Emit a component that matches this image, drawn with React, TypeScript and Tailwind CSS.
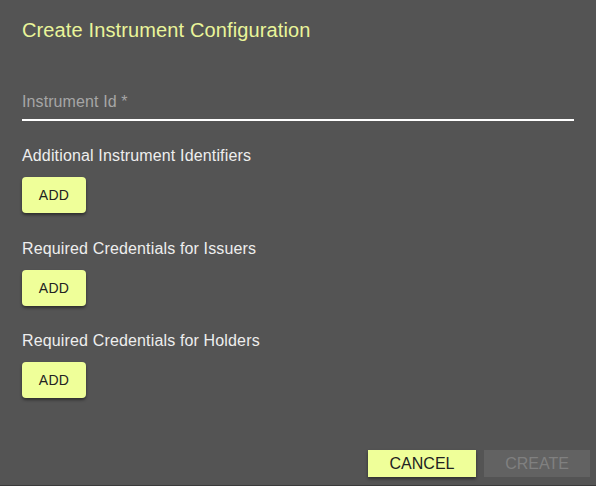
import React from "react";

const font = { fontFamily: '"Liberation Sans", Arial, sans-serif' };

function AddButton() {
  return (
    <button className="mt-[9px] h-[36px] w-[64px] rounded-[4px] bg-[#efff99] text-[14px] text-[#222] tracking-[0.3px] shadow-[0_2px_3px_rgba(0,0,0,0.45)]">
      ADD
    </button>
  );
}

export default function App() {
  return (
    <div
      style={font}
      className="w-[596px] h-[486px] bg-[#545454] border-b border-[#3a3a3a] flex flex-col overflow-hidden"
    >
      <div className="px-[22px] flex flex-col">
        <div className="pt-[14px] h-[46px] text-[20px] leading-[32px] tracking-[0.13px] text-[#eaf59a]">
          Create Instrument Configuration
        </div>
        <div className="mt-[44px] h-[24px] leading-[24px] text-[16px] tracking-[0.1px] text-[#a6a6a6] w-[552px]">
          Instrument Id *
        </div>
        <div className="mt-[5px] h-[2px] w-[552px] bg-white" />

        <div className="mt-[23px] h-[24px] leading-[24px] text-[16px] tracking-[0.15px] text-[#eeeeee]">
          Additional Instrument Identifiers
        </div>
        <div>
          <AddButton />
        </div>

        <div className="mt-[24px] h-[24px] leading-[24px] text-[16px] tracking-[0.15px] text-[#eeeeee]">
          Required Credentials for Issuers
        </div>
        <div>
          <AddButton />
        </div>

        <div className="mt-[23px] h-[24px] leading-[24px] text-[16px] tracking-[0.15px] text-[#eeeeee]">
          Required Credentials for Holders
        </div>
        <div>
          <AddButton />
        </div>
      </div>

      <div className="mt-[52px] flex justify-end gap-[8px] pr-[6px]">
        <button className="h-[27px] w-[108px] bg-[#efff99] text-[16px] text-[#222] shadow-[0_2px_3px_rgba(0,0,0,0.45)]">
          CANCEL
        </button>
        <button className="h-[27px] w-[106px] bg-[#626262] text-[16px] text-[#808080]">
          CREATE
        </button>
      </div>
    </div>
  );
}
